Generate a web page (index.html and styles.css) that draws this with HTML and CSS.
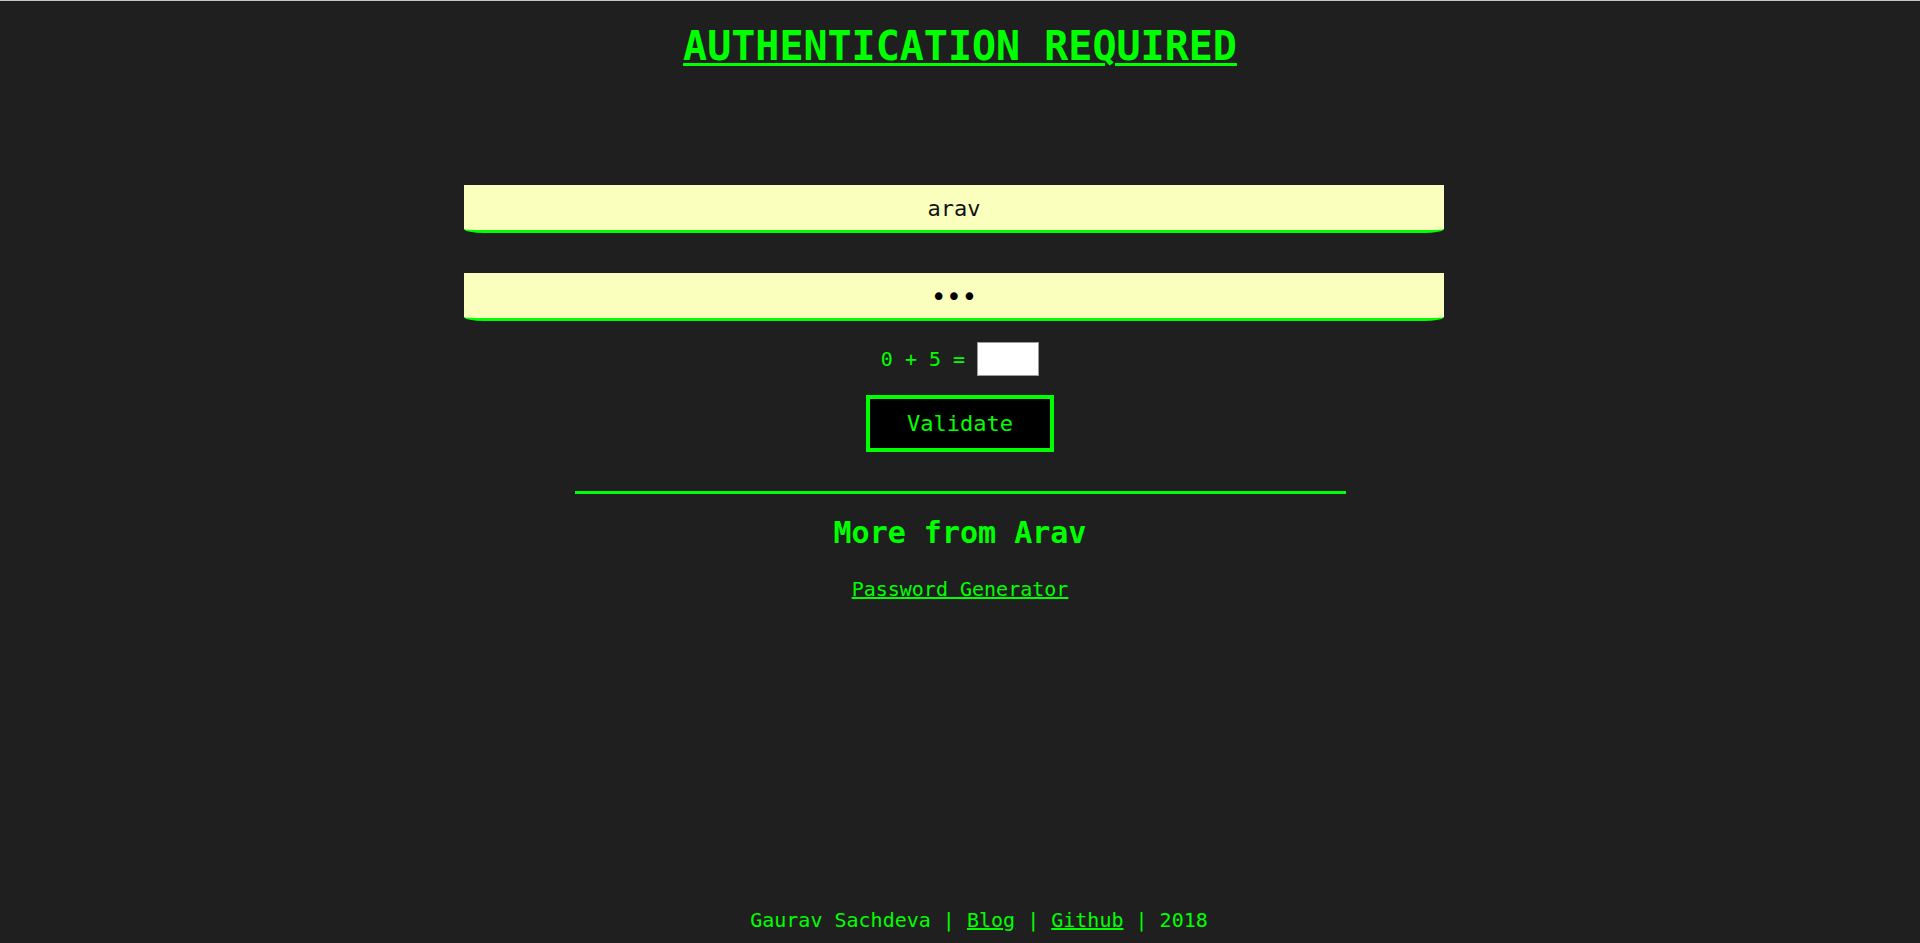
FILE: index.html
```html
<!DOCTYPE html>
<html>
<head>
<meta charset="utf-8">
<title>Authentication Required</title>
<link rel="stylesheet" href="styles.css">
</head>
<body>
<h1 class="title"><a href="#" class="title-link">AUTHENTICATION REQUIRED</a></h1>
<form class="auth-form" onsubmit="return false;">
  <input class="field" type="text" value="arav">
  <input class="field field-pass" type="password" value="abc">
  <div class="captcha">
    <span class="captcha-q">0 + 5 =</span>
    <input class="captcha-box" type="text">
  </div>
  <button class="validate" type="submit">Validate</button>
</form>
<div class="rule"></div>
<h2 class="more">More from Arav</h2>
<a class="more-link" href="#">Password Generator</a>
<footer class="footer">Gaurav Sachdeva | <a href="#" class="foot-link">Blog</a> | <a href="#" class="foot-link">Github</a> | 2018</footer>
</body>
</html>
```
FILE: styles.css
```css
html, body {
  margin: 0;
  padding: 0;
}
body {
  background: #1f1f1f;
  border-top: 1px solid #c6c6c6;
  box-sizing: border-box;
  min-height: 100vh;
  display: flex;
  flex-direction: column;
  align-items: center;
  font-family: "DejaVu Sans Mono", monospace;
  color: #00ff00;
}
.title {
  margin: 21px 0 0;
  font-size: 40px;
  line-height: 48px;
  font-weight: bold;
  text-align: center;
}
.title-link {
  color: #00ff00;
  text-decoration: underline;
  text-decoration-thickness: 3px;
  text-underline-offset: 3px;
}
.auth-form {
  margin-top: 115px;
  display: flex;
  flex-direction: column;
  align-items: center;
  width: 100%;
}
.field {
  box-sizing: border-box;
  width: 980px;
  height: 48px;
  margin: 0 12px 0 0;
  padding: 2px 0 0;
  border: 0;
  border-bottom: 3px solid #00ff00;
  border-radius: 0 0 20px 20px / 0 0 4px 4px;
  background: #faffbd;
  color: #111;
  font-family: "DejaVu Sans Mono", monospace;
  font-size: 22px;
  text-align: center;
  outline: none;
}
.field-pass {
  margin-top: 40px;
  font-size: 26px;
  font-family: "DejaVu Sans", sans-serif;
  color: #000;
}
.captcha {
  margin-top: 21px;
  height: 34px;
  display: flex;
  align-items: center;
  font-size: 20px;
}
.captcha-q {
  line-height: 24px;
}
.captcha-box {
  box-sizing: border-box;
  width: 62px;
  height: 34px;
  margin: 0 0 0 12px;
  border: 1px solid #9a9a9a;
  background: #fff;
  padding: 0;
}
.validate {
  box-sizing: border-box;
  margin-top: 19px;
  width: 188px;
  height: 57px;
  border: 4px solid #00ff00;
  background: #000;
  color: #00ff00;
  font-family: "DejaVu Sans Mono", monospace;
  font-size: 22px;
  padding: 0;
}
.rule {
  margin-top: 39px;
  width: 771px;
  height: 3px;
  background: #00ff00;
}
.more {
  margin: 21px 0 0;
  font-size: 30px;
  line-height: 36px;
  font-weight: bold;
}
.more-link {
  margin-top: 26px;
  font-size: 20px;
  line-height: 24px;
  color: #00ff00;
}
.footer {
  margin-top: auto;
  padding: 0 0 11px 38px;
  font-size: 20px;
  line-height: 24px;
  color: #00ff00;
}
.foot-link {
  color: #00ff00;
}
```
